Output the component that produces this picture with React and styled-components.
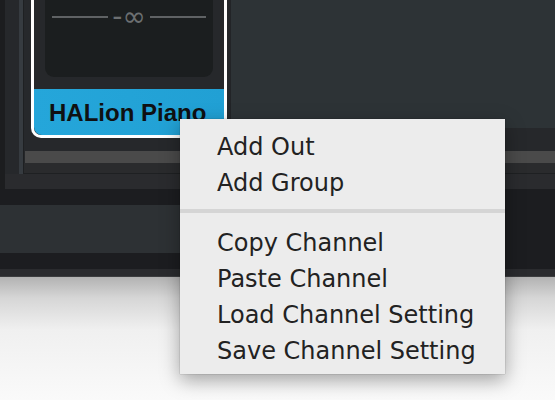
import React from 'react';
import styled, { createGlobalStyle } from 'styled-components';

const Global = createGlobalStyle`
  html, body { margin: 0; padding: 0; }
  body { width: 555px; height: 400px; overflow: hidden; }
`;

const Desktop = styled.div`
  position: relative;
  width: 555px;
  height: 400px;
  overflow: hidden;
  background: linear-gradient(#b2b2b2 277px, #d6d6d6 298px, #f0f0f0 330px, #fafafa 400px);
`;

const Window = styled.div`
  display: flex;
  flex-direction: column;
  height: 276px;
  border-bottom: 1px solid #3c3d3f;
  background: #1c1d20;
`;

const Upper = styled.div`
  display: flex;
  height: 189px;
`;

const Gutter = styled.div`
  width: 5px;
  background: #1c1d1f;
`;

const Body = styled.div`
  flex: 1;
  display: flex;
  flex-direction: column;
  background: #2a2b2e;
`;

const Mixer = styled.div`
  display: flex;
  height: 174px;
`;

const SideBar = styled.div`
  width: 14px;
  background: #26282b;
`;

const Stripe = styled.div`
  width: 4px;
  background: #363b40;
  border-right: 1px solid #1e2022;
`;

const Main = styled.div`
  flex: 1;
  display: flex;
  flex-direction: column;
  background: #26282b;
  border-bottom: 1px solid #1e2022;
`;

const TopRow = styled.div`
  display: flex;
  align-items: flex-start;
  height: 151px;
  padding-left: 7px;
`;

const Strip = styled.div`
  width: 190px;
  height: 135px;
  display: flex;
  flex-direction: column;
  border: 3px solid #ffffff;
  border-top: none;
  border-radius: 0 0 0 10px;
  background: #26282b;
`;

const FaderPanel = styled.div`
  height: 77px;
  margin: 0 11px 12px;
  background: #1b1e1f;
  border-radius: 0 0 9px 9px;
`;

const Fader = styled.div`
  display: flex;
  align-items: center;
  gap: 4px;
  height: 34px;
  padding: 0 7px;
  color: #6c6f71;
  font-family: "DejaVu Sans", sans-serif;
  font-size: 28px;
  line-height: 1;
`;

const FaderLine = styled.div`
  flex: 1;
  height: 2px;
  background: #5f6264;
`;

const NameLabel = styled.div`
  height: 46px;
  padding: 1px 0 0 15px;
  box-sizing: border-box;
  background: linear-gradient(90deg, #25a6da, #21a0d4);
  border-radius: 0 0 0 8px;
  color: #0f1012;
  font-family: "Liberation Sans", Arial, sans-serif;
  font-weight: bold;
  font-size: 24px;
  line-height: 46px;
  white-space: nowrap;
  overflow: hidden;
`;

const RightPanel = styled.div`
  flex: 1;
  height: 128px;
  margin-left: 3px;
  background: #2d3336;
  border-left: 1px solid #222427;
`;

const GrayBar = styled.div`
  height: 12px;
  margin-left: 1px;
  background: #4a4a4a;
`;

const Lower = styled.div`
  flex: 1;
  background: #2a2b2d;
`;

const Dock = styled.div`
  height: 80px;
  padding-top: 16px;
  box-sizing: border-box;
  background: #1c1d20;
`;

const Band = styled.div`
  width: 400px;
  height: 48px;
  background: #2d3134;
`;

const Foot = styled.div`
  flex: 1;
  background: #2a2b2e;
`;

const Menu = styled.div`
  position: absolute;
  left: 180px;
  top: 119px;
  width: 325px;
  height: 255px;
  box-sizing: border-box;
  padding: 10px 0 6px;
  background: #ececec;
  box-shadow: 0 6px 18px rgba(0, 0, 0, 0.35), 0 0 1px rgba(0, 0, 0, 0.4);
  font-family: "DejaVu Sans", sans-serif;
  font-size: 24px;
  color: #222;
`;

const Item = styled.div`
  height: 36px;
  line-height: 36px;
  padding-left: 37px;
  white-space: nowrap;
`;

const Separator = styled.div`
  height: 4px;
  margin: 8px 0 12px;
  background: #d5d5d5;
`;

const groups = [
  ['Add Out', 'Add Group'],
  ['Copy Channel', 'Paste Channel', 'Load Channel Setting', 'Save Channel Setting'],
];

export default function App() {
  return (
    <Desktop>
      <Global />
      <Window>
        <Upper>
          <Gutter />
          <Body>
            <Mixer>
              <SideBar />
              <Stripe />
              <Main>
                <TopRow>
                  <Strip>
                    <FaderPanel>
                      <Fader>
                        <FaderLine />
                        <span>-∞</span>
                        <FaderLine />
                      </Fader>
                    </FaderPanel>
                    <NameLabel>HALion Piano</NameLabel>
                  </Strip>
                  <RightPanel />
                </TopRow>
                <GrayBar />
                <Lower />
              </Main>
            </Mixer>
          </Body>
        </Upper>
        <Dock>
          <Band />
        </Dock>
        <Foot />
      </Window>
      <Menu>
        {groups.map((g, i) => (
          <React.Fragment key={i}>
            {i > 0 && <Separator />}
            {g.map(label => (
              <Item key={label}>{label}</Item>
            ))}
          </React.Fragment>
        ))}
      </Menu>
    </Desktop>
  );
}
